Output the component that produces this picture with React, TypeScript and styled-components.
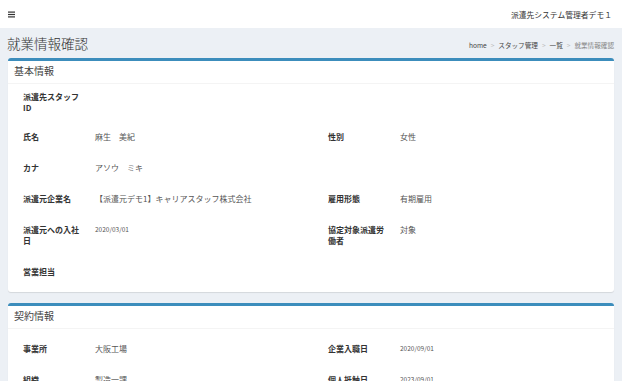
import React from "react";
import styled, { createGlobalStyle } from "styled-components";

const GlobalStyle = createGlobalStyle`
  body {
    margin: 0;
    background: #ecf0f5;
    font-family: "Noto Sans CJK JP", "Noto Sans", sans-serif;
    color: #333;
  }
`;

type Field = { label: string; value?: string; small?: boolean };
type Row = [Field, Field?];

const basicRows: Row[] = [
  [{ label: "派遣先スタッフID" }],
  [{ label: "氏名", value: "麻生　美紀" }, { label: "性別", value: "女性" }],
  [{ label: "カナ", value: "アソウ　ミキ" }],
  [
    { label: "派遣元企業名", value: "【派遣元デモ1】キャリアスタッフ株式会社" },
    { label: "雇用形態", value: "有期雇用" },
  ],
  [
    { label: "派遣元への入社日", value: "2020/03/01", small: true },
    { label: "協定対象派遣労働者", value: "対象" },
  ],
  [{ label: "営業担当" }],
];

const contractRows: Row[] = [
  [
    { label: "事業所", value: "大阪工場" },
    { label: "企業入職日", value: "2020/09/01", small: true },
  ],
  [
    { label: "組織", value: "製造一課" },
    { label: "個人抵触日", value: "2023/09/01", small: true },
  ],
];

export default function App() {
  return (
    <>
      <GlobalStyle />
      <Header>
        <MenuIcon width="7" height="7" viewBox="0 0 7 7">
          <rect x="0" y="0.5" width="7" height="1.2" fill="#333" />
          <rect x="0" y="2.9" width="7" height="1.2" fill="#333" />
          <rect x="0" y="5.3" width="7" height="1.2" fill="#333" />
        </MenuIcon>
        <UserName>派遣先システム管理者デモ１</UserName>
      </Header>
      <Content>
        <TitleBar>
          <Title>就業情報確認</Title>
          <Breadcrumb>
            <Crumb>home</Crumb>
            <Sep>&gt;</Sep>
            <Crumb>スタッフ管理</Crumb>
            <Sep>&gt;</Sep>
            <Crumb>一覧</Crumb>
            <Sep>&gt;</Sep>
            <Crumb $active>就業情報確認</Crumb>
          </Breadcrumb>
        </TitleBar>
        <InfoBox title="基本情報" rows={basicRows} />
        <InfoBox title="契約情報" rows={contractRows} spaced />
      </Content>
    </>
  );
}

function InfoBox({ title, rows, spaced }: { title: string; rows: Row[]; spaced?: boolean }) {
  return (
    <Box $spaced={spaced}>
      <BoxHeader>{title}</BoxHeader>
      <BoxBody>
        {rows.map((row, i) => (
          <FieldRow key={i} $first={i === 0 && !spaced}>
            <FieldCell field={row[0]} />
            {row[1] ? <FieldCell field={row[1]} /> : <div />}
          </FieldRow>
        ))}
      </BoxBody>
    </Box>
  );
}

function FieldCell({ field }: { field: Field }) {
  return (
    <Cell>
      <Label>{field.label}</Label>
      <Value $small={field.small}>{field.value}</Value>
    </Cell>
  );
}

const Header = styled.header`
  height: 28px;
  background: #fff;
  display: flex;
  align-items: center;
  justify-content: space-between;
  padding: 0 10px 0 8px;
`;

const MenuIcon = styled.svg`
  display: block;
`;

const UserName = styled.span`
  font-size: 7.8px;
  color: #333;
`;

const Content = styled.main`
  padding: 0 8px 20px;
`;

const TitleBar = styled.div`
  height: 30px;
  display: flex;
  align-items: center;
  justify-content: space-between;
`;

const Title = styled.h1`
  margin: 0 0 0 -1px;
  font-size: 13.5px;
  font-weight: 300;
  color: #333;
`;

const Breadcrumb = styled.div`
  display: flex;
  align-items: center;
  gap: 4px;
  font-size: 6.6px;
  margin-top: 3px;
`;

const Crumb = styled.span<{ $active?: boolean }>`
  color: ${(p) => (p.$active ? "#888" : "#444")};
`;

const Sep = styled.span`
  color: #bbb;
`;

const Box = styled.section<{ $spaced?: boolean }>`
  background: #fff;
  border-top: 3px solid #3c8dbc;
  border-radius: 3px;
  box-shadow: 0 1px 1px rgba(0, 0, 0, 0.1);
  margin-top: ${(p) => (p.$spaced ? "11px" : "0")};
`;

const BoxHeader = styled.div`
  height: 23px;
  padding: 0 6px 3px;
  box-sizing: border-box;
  display: flex;
  align-items: center;
  font-size: 10px;
  color: #444;
  border-bottom: 1px solid #f4f4f4;
`;

const BoxBody = styled.div`
  padding: 4px 15px 5px;
`;

const FieldRow = styled.div<{ $first?: boolean }>`
  display: grid;
  grid-template-columns: 1fr 1fr;
  column-gap: 34px;
  padding: ${(p) => (p.$first ? "3px 0 8px" : "10px 0")};
`;

const Cell = styled.div`
  display: grid;
  grid-template-columns: 72px 1fr;
  align-items: start;
`;

const Label = styled.div`
  font-size: 8px;
  line-height: 11px;
  font-weight: 700;
  color: #333;
  padding-right: 12px;
`;

const Value = styled.div<{ $small?: boolean }>`
  font-size: ${(p) => (p.$small ? "6.5px" : "8px")};
  line-height: 11px;
  color: #555;
`;
